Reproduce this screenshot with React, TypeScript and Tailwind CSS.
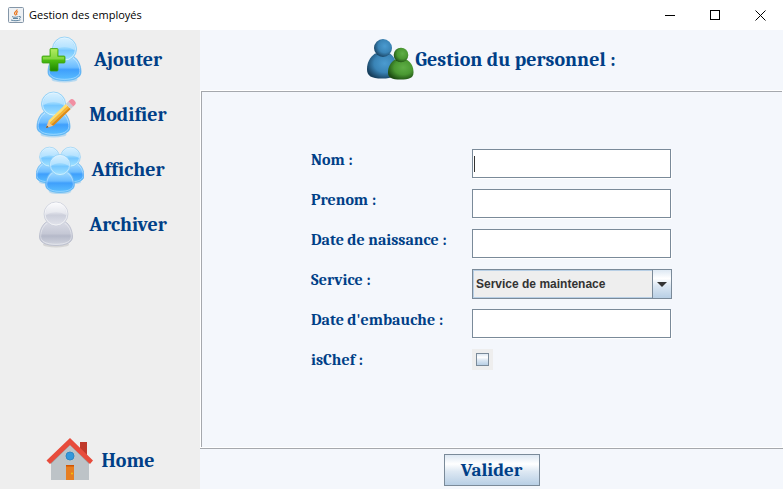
import React, { useState } from "react";

const serif = "font-['Cambria','Liberation_Serif',serif] font-bold text-[#003f87]";
const fieldClass =
  "block h-[29px] w-[199px] border border-[#7a8a99] bg-white px-1 font-['Liberation_Sans',sans-serif] text-xs text-[#333] shadow-[1px_1px_0_#fff] outline-none";

function Gradients() {
  return (
    <svg width="0" height="0" className="absolute" aria-hidden="true">
      <defs>
        <linearGradient id="blueHead" x1="0" y1="0" x2="0" y2="1">
          <stop offset="0" stopColor="#c9ebff" />
          <stop offset="0.5" stopColor="#8fd4ff" />
          <stop offset="0.55" stopColor="#74c6ff" />
          <stop offset="1" stopColor="#a6e4ff" />
        </linearGradient>
        <linearGradient id="blueBody" x1="0" y1="0" x2="0" y2="1">
          <stop offset="0" stopColor="#a5dcff" />
          <stop offset="0.45" stopColor="#6bbcff" />
          <stop offset="0.55" stopColor="#3f9ffc" />
          <stop offset="1" stopColor="#5cc0ff" />
        </linearGradient>
        <linearGradient id="greyHead" x1="0" y1="0" x2="0" y2="1">
          <stop offset="0" stopColor="#fbfbfd" />
          <stop offset="0.45" stopColor="#dddfe8" />
          <stop offset="0.55" stopColor="#cccfdb" />
          <stop offset="1" stopColor="#e2e4ec" />
        </linearGradient>
        <linearGradient id="greyBody" x1="0" y1="0" x2="0" y2="1">
          <stop offset="0" stopColor="#dadce6" />
          <stop offset="0.5" stopColor="#c5c8d5" />
          <stop offset="0.6" stopColor="#b5b9c9" />
          <stop offset="1" stopColor="#d4d7e1" />
        </linearGradient>
        <linearGradient id="plus" x1="0" y1="0" x2="0" y2="1">
          <stop offset="0" stopColor="#a4e84a" />
          <stop offset="0.5" stopColor="#4fc012" />
          <stop offset="1" stopColor="#1c8600" />
        </linearGradient>
        <radialGradient id="teamBlue" cx="0.6" cy="0.4" r="0.65">
          <stop offset="0" stopColor="#4b9bd0" />
          <stop offset="0.55" stopColor="#3a84b6" />
          <stop offset="1" stopColor="#173f5d" />
        </radialGradient>
        <radialGradient id="teamGreen" cx="0.6" cy="0.4" r="0.65">
          <stop offset="0" stopColor="#5fae46" />
          <stop offset="0.55" stopColor="#4a9832" />
          <stop offset="1" stopColor="#1d4d12" />
        </radialGradient>
      </defs>
    </svg>
  );
}

type PersonProps = { cx: number; cy: number; scale?: number; grey?: boolean };

function Person({ cx, cy, scale = 1, grey = false }: PersonProps) {
  const edge = grey ? "#b9bccb" : "#5fb4ef";
  return (
    <g transform={`translate(${cx} ${cy}) scale(${scale})`}>
      <ellipse cx="0" cy="30.5" rx="13" ry="3" fill={grey ? "#aaa" : "#4cb1f5"} opacity="0.35" />
      <path
        d="M-9 7.500C-14 10.500-16.500 17-16.500 23C-16.500 28.500-10 31.500 0 31.500S16.500 28.500 16.500 23C16.500 17 14 10.500 9 7.500Z"
        fill={grey ? "url(#greyBody)" : "url(#blueBody)"}
        stroke={edge}
        strokeWidth="0.8"
      />
      <path
        d="M-8.500 9C-13 12-15.300 17-15.300 22.500C-15.300 27.500-9.500 30.300 0 30.300S15.300 27.500 15.300 22.500C15.300 17 13 12 8.500 9"
        fill="none"
        stroke="#fff"
        strokeOpacity="0.5"
        strokeWidth="0.8"
      />
      <circle cx="0" cy="0" r="12" fill={grey ? "url(#greyHead)" : "url(#blueHead)"} stroke={grey ? "#cdd0dc" : "#8acdf5"} strokeWidth="0.8" />
      <circle cx="0" cy="0" r="11" fill="none" stroke="#fff" strokeOpacity="0.6" strokeWidth="0.9" />
      <path d="M-10.500 1.500C-5-3 5-3 10.500 1.500C10-6 6-10.500 0-10.500S-10-6-10.500 1.500Z" fill="#fff" opacity="0.3" />
    </g>
  );
}

function Icon({ children }: { children: React.ReactNode }) {
  return (
    <svg viewBox="0 0 48 48" className="size-12 shrink-0" aria-hidden="true">
      {children}
    </svg>
  );
}

const addIcon = (
  <Icon>
    <Person cx={26.500} cy={13} />
    <path
      d="M13 12.500h6q1 0 1 1V20h6q1 0 1 1v5q0 1-1 1h-6v7q0 1-1 1h-6q-1 0-1-1v-7H5q-1 0-1-1v-5q0-1 1-1h7v-6.500q0-1 1-1Z"
      fill="url(#plus)"
      stroke="#3aa10f"
      strokeWidth="0.8"
    />
    <path d="M13 13.500h6v7.500h7v2.500H5V21h8Z" fill="#d0f78c" opacity="0.35" />
  </Icon>
);

const editIcon = (
  <Icon>
    <Person cx={20.500} cy={13} />
    <g transform="translate(13 37) rotate(-44)">
      <path d="M0 0L7-3.500V3.500Z" fill="#f0c896" />
      <path d="M0 0L2.500-1.200V1.200Z" fill="#6b4a26" />
      <path d="M7-3.500H31V-1H6Z" fill="#ffdf70" />
      <path d="M6-1H31V1.300H6Z" fill="#fbb52c" />
      <path d="M6 1.300H31V3.500H7Z" fill="#e08a14" />
      <path d="M31-3.500h3.500v7H31Z" fill="#c9ccd2" />
      <path d="M34.500-3.500H37q2.500 0 2.500 3.500T37 3.500h-2.500Z" fill="#f18fa2" />
    </g>
  </Icon>
);

const showIcon = (
  <Icon>
    <Person cx={13.500} cy={11} scale={0.82} />
    <Person cx={34.500} cy={11} scale={0.82} />
    <Person cx={24} cy={19} scale={0.87} />
  </Icon>
);

const archiveIcon = (
  <Icon>
    <Person cx={23} cy={13} grey />
  </Icon>
);

const homeIcon = (
  <Icon>
    <path d="M35 5h7v19l-7-6Z" fill="#c0392b" />
    <path d="M25 7L6 25v18h38V25Z" fill="#bdc3c7" />
    <path d="M25 8L6 27v-4L25 5l19 18v4Z" fill="#95a5a6" />
    <path d="M25 1L1.500 23.500L5 27L25 8L45 27L48 23.500Z" fill="#e74c3c" />
    <circle cx="25" cy="19" r="4" fill="#3498db" stroke="#2f87c4" />
    <path d="M21 28h8v15h-8Z" fill="#e67e22" />
    <path d="M21 28h8v1.500h-8Z" fill="#d35400" />
    <circle cx="27" cy="36.500" r="1" fill="#f1c40f" />
  </Icon>
);

const teamIcon = (
  <Icon>
    <path d="M8 17.500C3 21 0 26.500 0 33C0 40 4 42.500 15 42.500S29.500 40 29.500 33C29.500 26.500 28 21 23 17.500Z" fill="url(#teamBlue)" />
    <circle cx="16" cy="12" r="9" fill="url(#teamBlue)" />
    <path d="M28 23.500C23.500 26.500 21 31 21 36.500C21 42 25 43.500 33.500 43.500S46.500 42 46.500 36.500C46.500 31 44.500 26.500 39.500 23.500Z" fill="url(#teamGreen)" />
    <circle cx="34" cy="19" r="7.300" fill="url(#teamGreen)" />
  </Icon>
);

function JavaIcon() {
  return (
    <svg viewBox="0 0 16 16" className="size-4" aria-hidden="true">
      <rect x="0.500" y="0.500" width="15" height="15" rx="1" fill="#eef1f4" stroke="#8496a8" />
      <path d="M9 2.500C9.500 4 6 5 6.500 6.500C6.800 7.500 7.500 7.500 7.500 8.500M10 4.500C8 5.500 8.500 7 9 8" fill="none" stroke="#e8741c" strokeWidth="1.200" />
      <path d="M4 9.500C5 10.500 9 10.500 10.500 9.500M5 11.500h5M3 13C6 14 10 14 12.500 12.800M11 9.500C13.500 9 13 11 11 11.500" fill="none" stroke="#4f7896" strokeWidth="0.900" />
    </svg>
  );
}

function NavButton({ icon, label }: { icon: React.ReactNode; label: string }) {
  return (
    <button type="button" className={`flex h-[55px] w-full items-center justify-center gap-2 text-xl leading-6 ${serif}`}>
      {icon}
      {label}
    </button>
  );
}

function Row({ id, label, children }: { id: string; label: string; children: React.ReactNode }) {
  return (
    <div className="grid h-[30px] grid-cols-[161px_201px] items-start">
      <label htmlFor={id} className={`whitespace-nowrap text-base leading-[22px] ${serif}`}>
        {label}
      </label>
      {children}
    </div>
  );
}

export default function App() {
  const [focused, setFocused] = useState(false);
  return (
    <div className="flex min-h-screen flex-col bg-white">
      <Gradients />
      <header className="flex h-[30px] items-center pl-2">
        <JavaIcon />
        <h1 className="ml-[5px] flex-1 font-['Open_Sans',sans-serif] text-[11px] leading-4 text-black">Gestion des employés</h1>
        <div className="flex h-full">
          <button type="button" aria-label="Réduire" className="flex w-[45px] items-center justify-center">
            <svg width="11" height="11" shapeRendering="crispEdges"><path d="M0 5.500h10" stroke="#000" /></svg>
          </button>
          <button type="button" aria-label="Agrandir" className="flex w-[45px] items-center justify-center">
            <svg width="11" height="11"><rect x="0.500" y="0.500" width="9" height="9" fill="none" stroke="#000" /></svg>
          </button>
          <button type="button" aria-label="Fermer" className="flex w-[45px] items-center justify-center">
            <svg width="11" height="11"><path d="M0.500 0.500l10 10M10.500 0.500l-10 10" stroke="#000" /></svg>
          </button>
        </div>
      </header>

      <div className="flex flex-1">
        <nav className="flex w-[200px] shrink-0 flex-col bg-[#eee] pb-px pt-0.5">
          <NavButton icon={addIcon} label="Ajouter" />
          <NavButton icon={editIcon} label="Modifier" />
          <NavButton icon={showIcon} label="Afficher" />
          <NavButton icon={archiveIcon} label="Archiver" />
          <div className="mt-auto">
            <NavButton icon={homeIcon} label="Home" />
          </div>
        </nav>

        <main className="flex min-w-0 flex-1 flex-col bg-[#f4f7fc]">
          <div className="flex h-[60px] items-center justify-center">
            {teamIcon}
            <h2 className={`text-xl leading-6 ${serif}`}>Gestion du personnel :</h2>
          </div>

          <form id="employee" className="flex flex-1 flex-col border border-white" onSubmit={(e) => e.preventDefault()}>
            <div className="flex flex-1 flex-col items-center gap-[10px] border-l border-t border-[#a5a8ad] py-[57px]">
              <Row id="nom" label="Nom :">
                <div className="relative">
                  <input
                    id="nom"
                    type="text"
                    className={fieldClass}
                    onFocus={() => setFocused(true)}
                    onBlur={() => setFocused(false)}
                  />
                  {!focused && <span className="pointer-events-none absolute left-0.5 top-[7px] h-4 w-px bg-[#333]" />}
                </div>
              </Row>
              <Row id="prenom" label="Prenom :">
                <input id="prenom" type="text" className={fieldClass} />
              </Row>
              <Row id="naissance" label="Date de naissance :">
                <input id="naissance" type="text" className={fieldClass} />
              </Row>
              <Row id="service" label="Service :">
                <div className="relative w-[200px]">
                  <select
                    id="service"
                    className="block h-[30px] w-full appearance-none rounded-none border border-[#7a8a99] bg-[#eee] pl-[3px] pr-5 font-['Liberation_Sans',sans-serif] text-xs font-bold text-[#333] shadow-[inset_0_0_0_1px_#b8cfe5] outline-none"
                  >
                    <option>Service de maintenace</option>
                  </select>
                  <span className="pointer-events-none absolute inset-y-0 right-0 flex w-5 items-center justify-center border border-[#7a8a99] bg-[linear-gradient(#dde8f3_0%,#fff_30%,#dde8f3_55%,#b8cfe5_100%)]">
                    <svg width="10" height="5" aria-hidden="true"><path d="M0 0h10l-5 5Z" fill="#333" /></svg>
                  </span>
                </div>
              </Row>
              <Row id="embauche" label="Date d'embauche :">
                <input id="embauche" type="text" className={fieldClass} />
              </Row>
              <Row id="chef" label="isChef :">
                <div className="flex size-[21px] items-center justify-center bg-[#eee]">
                  <input
                    id="chef"
                    type="checkbox"
                    className="size-[13px] appearance-none border border-[#7a8a99] bg-[linear-gradient(#dde8f3_0%,#fff_30%,#dde8f3_55%,#b8cfe5_100%)] checked:bg-none checked:bg-[#7a8a99]"
                  />
                </div>
              </Row>
            </div>
          </form>

          <footer className="flex h-[41px] justify-center border-t border-[#a5a8ad] pt-[5px]">
            <button
              type="submit"
              form="employee"
              className={`h-8 w-24 border border-[#7a8a99] bg-[linear-gradient(#dde8f3_0%,#fff_30%,#dde8f3_55%,#b8cfe5_100%)] text-[19px] leading-6 ${serif}`}
            >
              Valider
            </button>
          </footer>
        </main>
      </div>
    </div>
  );
}
